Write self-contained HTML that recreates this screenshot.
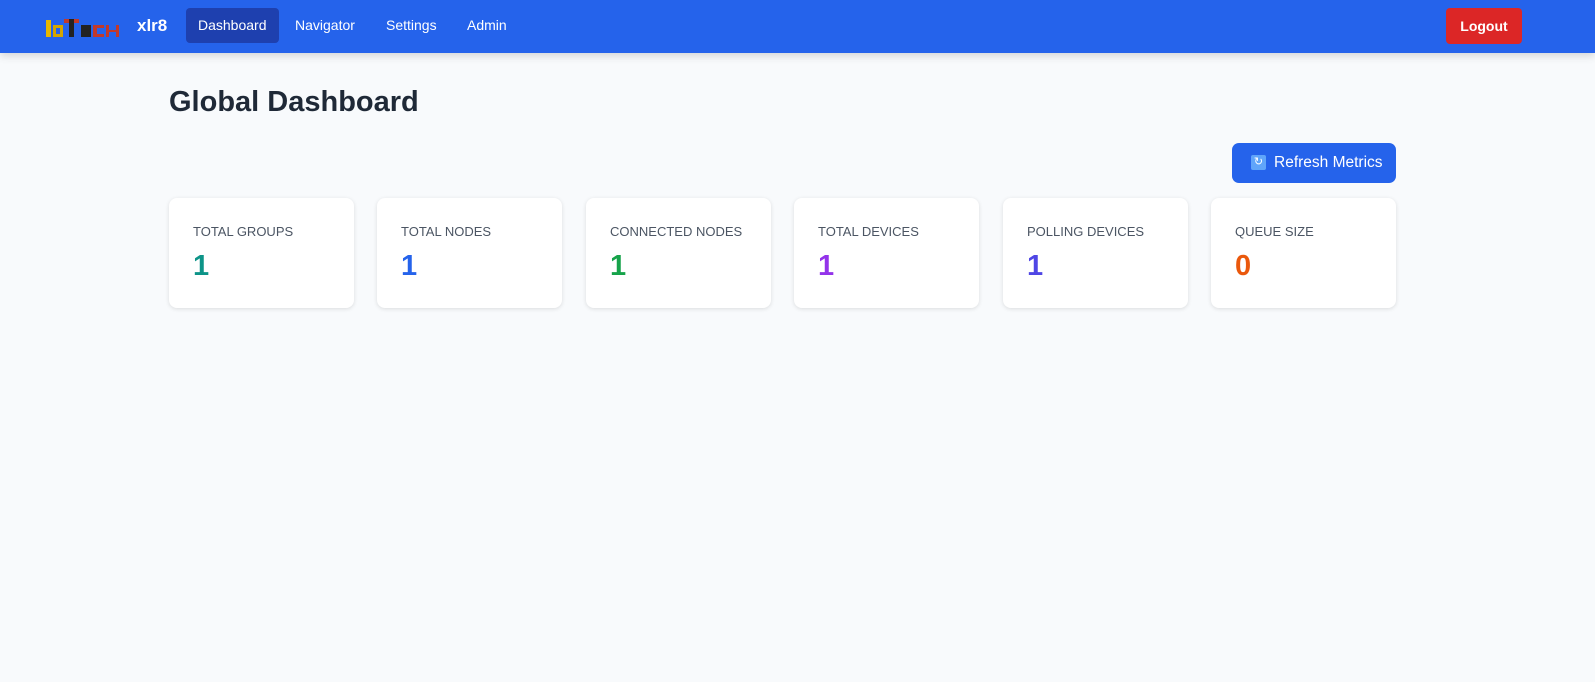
<!DOCTYPE html>
<html><head><style>
*{box-sizing:border-box;margin:0;padding:0}
body{width:1595px;height:682px;background:#f8fafc;font-family:"Liberation Sans","DejaVu Sans",sans-serif;overflow:hidden;position:relative}
.nav{position:absolute;left:0;top:0;width:1595px;height:53px;background:#2563eb;box-shadow:0 3px 8px rgba(0,0,0,.15)}
.logo{position:absolute;left:46px;top:17px;height:21px;width:74px}
.brand{position:absolute;left:137px;top:16px;color:#fff;font-weight:bold;font-size:17px}
.link{position:absolute;top:8px;height:35px;line-height:35px;color:#fff;font-size:14px;padding:0 12px;border-radius:4px}
.logout{position:absolute;left:1446px;top:8px;width:76px;height:36px;background:#dc2626;color:#fff;font-weight:bold;font-size:14px;line-height:36px;text-align:center;border-radius:4px}
h1{position:absolute;left:169px;top:86px;font-size:29px;color:#1f2937;font-weight:bold}
.btn{position:absolute;left:1232px;top:143px;width:164px;height:40px;background:#2563eb;color:#fff;border-radius:7px;font-size:15.5px;line-height:40px;padding-left:42px}
.ic{position:absolute;left:19px;top:12px;width:15px;height:15px;background:#60a5fa;border-radius:2px;color:#fff;font-size:11px;line-height:15px;text-align:center}
.card{position:absolute;top:198px;width:185px;height:110px;background:#fff;border-radius:8px;box-shadow:0 1px 4px rgba(0,0,0,.12)}
.card .l{position:absolute;left:24px;top:26px;font-size:13px;color:#4b5563}
.card .v{position:absolute;left:24px;top:52px;font-size:29px;font-weight:bold}
</style></head><body>
<div class="nav">
<svg class="logo" viewBox="0 0 74 21" preserveAspectRatio="none">
<rect x="0" y="3" width="5" height="17" fill="#e6b800"/>
<rect x="7" y="8" width="10" height="12" fill="#d4a500"/><rect x="10" y="11" width="4" height="6" fill="#2563eb"/>
<rect x="18" y="2" width="15" height="4" fill="#c0392b"/><rect x="23" y="2" width="5" height="18" fill="#222"/>
<rect x="35" y="8" width="10" height="12" fill="#222"/>
<rect x="47" y="8" width="11" height="12" fill="#c0392b"/><rect x="51" y="11" width="7" height="6" fill="#2563eb"/>
<rect x="60" y="8" width="3" height="12" fill="#c0392b"/><rect x="70" y="8" width="3" height="12" fill="#c0392b"/><rect x="60" y="13" width="13" height="2" fill="#c0392b"/>
</svg>
<div class="brand">xlr8</div>
<div class="link" style="left:186px;background:#1e40af">Dashboard</div>
<div class="link" style="left:283px">Navigator</div>
<div class="link" style="left:374px">Settings</div>
<div class="link" style="left:455px">Admin</div>
<div class="logout">Logout</div>
</div>
<h1>Global Dashboard</h1>
<div class="btn"><span class="ic">↻</span>Refresh Metrics</div>
<div class="card" style="left:169px"><div class="l">TOTAL GROUPS</div><div class="v" style="color:#0d9488">1</div></div>
<div class="card" style="left:377px"><div class="l">TOTAL NODES</div><div class="v" style="color:#2563eb">1</div></div>
<div class="card" style="left:586px"><div class="l">CONNECTED NODES</div><div class="v" style="color:#16a34a">1</div></div>
<div class="card" style="left:794px"><div class="l">TOTAL DEVICES</div><div class="v" style="color:#9333ea">1</div></div>
<div class="card" style="left:1003px"><div class="l">POLLING DEVICES</div><div class="v" style="color:#4f46e5">1</div></div>
<div class="card" style="left:1211px"><div class="l">QUEUE SIZE</div><div class="v" style="color:#ea580c">0</div></div>
</body></html>
